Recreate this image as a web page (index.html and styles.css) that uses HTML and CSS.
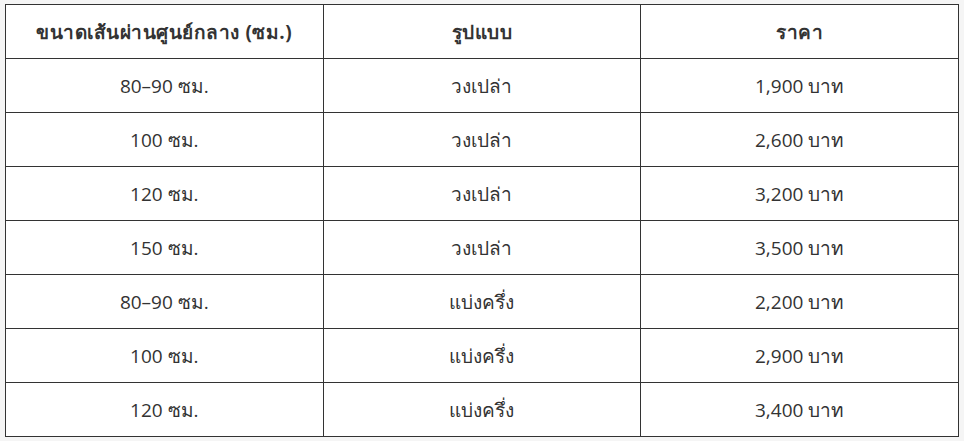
FILE: index.html
```html
<!DOCTYPE html>
<html lang="th">
<head>
<meta charset="utf-8">
<link rel="stylesheet" href="styles.css">
</head>
<body>
<table class="price-table">
<thead>
<tr><th>ขนาดเส้นผ่านศูนย์กลาง (ซม.)</th><th>รูปแบบ</th><th>ราคา</th></tr>
</thead>
<tbody>
<tr><td>80–90 ซม.</td><td>วงเปล่า</td><td>1,900 บาท</td></tr>
<tr><td>100 ซม.</td><td>วงเปล่า</td><td>2,600 บาท</td></tr>
<tr><td>120 ซม.</td><td>วงเปล่า</td><td>3,200 บาท</td></tr>
<tr><td>150 ซม.</td><td>วงเปล่า</td><td>3,500 บาท</td></tr>
<tr><td>80–90 ซม.</td><td>แบ่งครึ่ง</td><td>2,200 บาท</td></tr>
<tr><td>100 ซม.</td><td>แบ่งครึ่ง</td><td>2,900 บาท</td></tr>
<tr><td>120 ซม.</td><td>แบ่งครึ่ง</td><td>3,400 บาท</td></tr>
</tbody>
</table>
</body>
</html>
```
FILE: styles.css
```css
html, body {
  margin: 0;
  background: #f5f5f5;
}
body {
  padding: 4px 6px 0 5px;
  font-family: "Open Sans", "Noto Sans", "DejaVu Sans", sans-serif;
  color: #333;
}
.price-table {
  width: 954px;
  border-collapse: collapse;
  background: #fff;
  table-layout: fixed;
}
.price-table th,
.price-table td {
  border: 1px solid #333;
  height: 53px;
  padding: 0;
  text-align: center;
  vertical-align: middle;
  font-size: 19px;
}
.price-table th {
  font-weight: bold;
  letter-spacing: 0.5px;
}
.price-table td {
  font-weight: normal;
}
```
